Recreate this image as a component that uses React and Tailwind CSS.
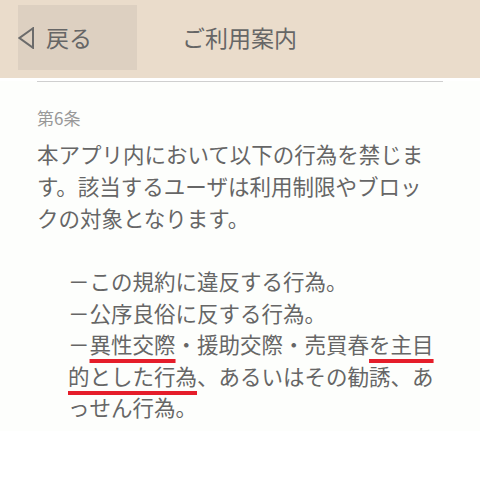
// App.jsx
const font = { fontFamily: '"Noto Sans CJK JP", "Noto Sans", sans-serif' }

function BackTriangle() {
  return (
    <svg width="16" height="22" viewBox="0 0 16 22" aria-hidden="true" className="shrink-0">
      <path d="M15 1.2 L1.5 11 L15 20.8 Z" fill="none" stroke="#6b6b6b" strokeWidth="2" strokeLinejoin="miter" />
    </svg>
  )
}

const mark = 'underline decoration-[#e51d2a] decoration-4 underline-offset-[6px] [text-decoration-skip-ink:none]'

export default function App() {
  return (
    <div className="w-[500px] h-[500px] bg-white" style={font}>
      <div className="w-[480px]">
        {/* Header */}
        <header className="h-[78px] bg-[#eadccb] flex items-start">
          <button className="mt-[5px] ml-[18px] h-[65px] w-[119px] bg-[#ddd0c1] flex items-center gap-[12px] text-[23px] text-[#666] leading-none">
            <BackTriangle />
            <span>戻る</span>
          </button>
          <h1 className="ml-[45px] h-[75px] flex items-center text-[23px] text-[#666] font-normal leading-none">
            ご利用案内
          </h1>
        </header>

        {/* Body */}
        <main className="px-[37px] pb-[8px] bg-[#fdfefc]">
          <div className="mt-[3px] h-px bg-[#cfcfcf]" />
          <p className="mt-[24px] text-[17px] leading-[24px] text-[#999]">第6条</p>
          <p className="mt-[8px] w-[395px] text-[21.5px] leading-[32px] text-[#666]">
            本アプリ内において以下の行為を禁じます。該当するユーザは利用制限やブロックの対象となります。
          </p>
          <ul className="mt-[31px] pl-[31px] text-[21.5px] leading-[31.5px] text-[#666]">
            <li>－この規約に違反する行為。</li>
            <li>－公序良俗に反する行為。</li>
            <li>
              －<span className={mark}>異性交際</span>・援助交際・売買春<span className={mark}>を主目</span>
              <span className={mark}>的とした行為</span>、あるいはその勧誘、あっせん行為。
            </li>
          </ul>
        </main>
      </div>
    </div>
  )
}
